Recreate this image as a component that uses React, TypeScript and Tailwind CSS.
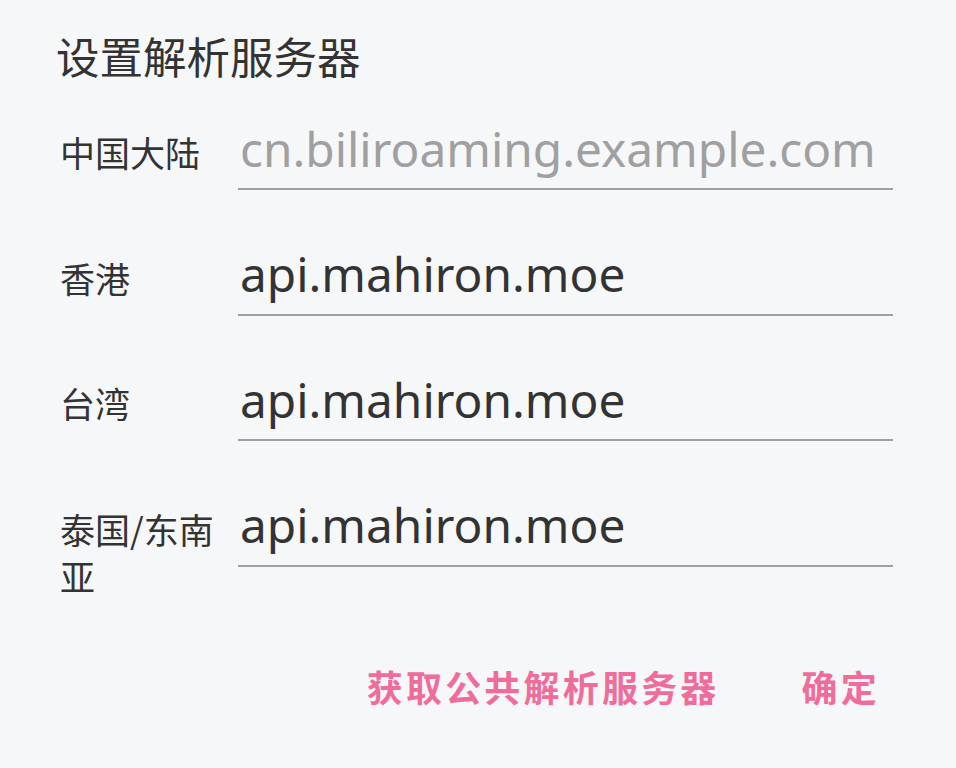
import React from "react";

const rows = [
  { label: "中国大陆", value: "", placeholder: "cn.biliroaming.example.com" },
  { label: "香港", value: "api.mahiron.moe", placeholder: "" },
  { label: "台湾", value: "api.mahiron.moe", placeholder: "" },
  { label: "泰国/东南亚", value: "api.mahiron.moe", placeholder: "" },
];

const cjk = { fontFamily: '"Noto Sans CJK SC", "Noto Sans", sans-serif' };
const latin = { fontFamily: '"Noto Sans", "Noto Sans CJK SC", sans-serif' };

export default function App() {
  return (
    <div className="min-h-[768px] w-[956px] bg-[#f6f7f9] text-[#333333]" style={cjk}>
      {/* Title */}
      <div className="pl-[56px] pt-[26px] text-[43.5px] leading-[60px]">设置解析服务器</div>

      {/* Server rows */}
      <div className="mt-[30px] flex flex-col pl-[60px]">
        {rows.map((row) => (
          <div key={row.label} className="flex h-[125.5px] items-start">
            <div className="w-[178px] shrink-0 pr-[14px] pt-[12px] text-[35px] leading-[47px]">
              {row.label}
            </div>
            <input
              defaultValue={row.value}
              placeholder={row.placeholder}
              className="h-[74px] w-[655px] border-b-2 border-[#a0a0a0] bg-transparent pb-[8px] pl-[2px] text-[47.8px] leading-[64px] text-[#333333] outline-none placeholder:text-[#a0a0a0]"
              style={latin}
            />
          </div>
        ))}
      </div>

      {/* Actions */}
      <div className="mt-[44px] flex justify-end gap-[82px] pr-[76px]">
        <button className="text-[36px] font-bold leading-[48px] tracking-[0.089em] text-[#f06c9a]">
          获取公共解析服务器
        </button>
        <button className="text-[36px] font-bold leading-[48px] tracking-[0.089em] text-[#f06c9a]">
          确定
        </button>
      </div>
    </div>
  );
}
